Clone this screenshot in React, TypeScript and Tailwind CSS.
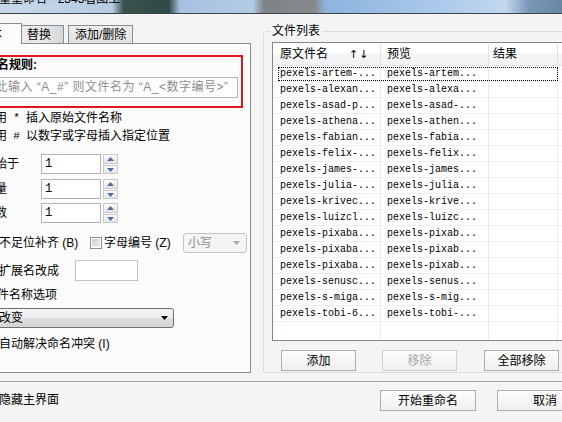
import React from "react";

const files: [string, string][] = [
  ["pexels-artem-...", "pexels-artem..."],
  ["pexels-alexan...", "pexels-alexa..."],
  ["pexels-asad-p...", "pexels-asad-..."],
  ["pexels-athena...", "pexels-athen..."],
  ["pexels-fabian...", "pexels-fabia..."],
  ["pexels-felix-...", "pexels-felix..."],
  ["pexels-james-...", "pexels-james..."],
  ["pexels-julia-...", "pexels-julia..."],
  ["pexels-krivec...", "pexels-krive..."],
  ["pexels-luizcl...", "pexels-luizc..."],
  ["pexels-pixaba...", "pexels-pixab..."],
  ["pexels-pixaba...", "pexels-pixab..."],
  ["pexels-pixaba...", "pexels-pixab..."],
  ["pexels-senusc...", "pexels-senus..."],
  ["pexels-s-miga...", "pexels-s-mig..."],
  ["pexels-tobi-6...", "pexels-tobi-..."],
];

function Tri({ up = false, color = "#000" }: { up?: boolean; color?: string }) {
  return (
    <svg width="7" height="4" viewBox="0 0 7 4">
      <path d={up ? "M0 4 L3.5 0 L7 4 Z" : "M0 0 L7 0 L3.5 4 Z"} fill={color} />
    </svg>
  );
}

function Check() {
  return (
    <span className="flex h-[12px] w-[12px] shrink-0 items-center justify-center border border-[#8f8f8f] bg-white">
      <span className="h-[8px] w-[8px] bg-[linear-gradient(135deg,#c9c9c9,#f3f3f3)]" />
    </span>
  );
}

function Spin({ label }: { label: string }) {
  return (
    <div className="flex h-[20px] items-center">
      <span className="w-[58px] leading-[16px]">{label}</span>
      <div className="h-[20px] w-[60px] border border-[#b4b4b4] bg-white pl-[3px] font-['Liberation_Mono',monospace] text-[12px] leading-[18px]">
        1
      </div>
      <div className="ml-[2px] flex h-[20px] w-[15px] flex-col gap-[1px]">
        <div className="flex h-[10px] items-center justify-center border border-[#c9c9c9] bg-[linear-gradient(#fbfbfb,#e4e4e4)]">
          <Tri up color="#4f6c9c" />
        </div>
        <div className="flex h-[9px] items-center justify-center border border-[#c9c9c9] bg-[linear-gradient(#fbfbfb,#e4e4e4)]">
          <Tri color="#4f6c9c" />
        </div>
      </div>
    </div>
  );
}

function Btn({ label, className, disabled = false }: { label: string; className: string; disabled?: boolean }) {
  return (
    <div
      className={`flex h-[21px] shrink-0 items-center justify-center border bg-[linear-gradient(#fbfbfb,#f0f0f0)] leading-[16px] ${
        disabled ? "border-[#d2d2d2] text-[#a6a6a6]" : "border-[#adadad] text-black"
      } ${className}`}
    >
      {label}
    </div>
  );
}

export default function App() {
  return (
    <div className="flex h-[422px] w-[562px] flex-col overflow-hidden bg-[#f4f4f4] font-['Liberation_Sans','Noto_Sans_CJK_SC',sans-serif] text-[12px] text-black">
      {/* title bar */}
      <div className="h-[14px] shrink-0 overflow-hidden border-b border-[#3b434b] bg-[linear-gradient(90deg,#c8d8e8_0%,#b6cce2_20%,#3a524c_22%,#2f4a45_30%,#a6c2e0_32%,#b2cbe4_45%,#7f8286_47%,#868a8e_56%,#8db4de_58%,#9dc0e6_70%,#b8d2ee_85%,#c2d8ee_90%,#7a98b8_94%,#6a86a4_100%)]">
        <div className="-ml-[13px] -mt-[8px] whitespace-nowrap text-[12px] leading-[14px]">批量重命名 - 2345看图王</div>
      </div>

      <div className="flex h-[367px] shrink-0">
        {/* left column */}
        <div className="-ml-[40px] w-[291px] shrink-0 pt-[9px]">
          <div className="flex h-[21px] items-end">
            <div className="relative z-10 flex h-[21px] w-[62px] items-center justify-end border border-b-0 border-[#898c95] bg-[#fbfbfb] pr-[19px] leading-[16px]">
              基本
            </div>
            <div className="flex h-[19px] w-[42px] items-center border border-l-0 border-[#898c95] bg-[linear-gradient(90deg,#ececec_0%,#e6e6e6_60%,#d6d6d6_100%)] pl-[5px] leading-[16px]">
              替换
            </div>
            <div className="ml-[4px] flex h-[19px] w-[65px] items-center border border-[#898c95] bg-[linear-gradient(#ededed,#e1e1e1)] pl-[6px] leading-[16px]">
              添加/删除
            </div>
          </div>
          <div className="-mt-[1px] flex h-[330px] flex-col border border-[#898c95] bg-[#fbfbfb] pl-[22px]">
            {/* rule box */}
            <div className="-ml-[13px] mt-[11px] flex h-[53px] w-[273px] flex-col border-2 border-[#e0161e]">
              <div className="ml-[13px] font-bold leading-[16px]">命名规则:</div>
              <div className="mt-[4px] h-[21px] w-[266px] border border-[#b4b4b4] bg-white pl-[10px] leading-[19px] tracking-[0.5px] whitespace-nowrap text-[#8c8c8c]">
                在此输入 “A_#” 则文件名为 “A_&lt;数字编号&gt;”
              </div>
            </div>
            <div className="mt-[2px] flex whitespace-nowrap leading-[16px]">
              使用<span className="w-[19px] text-center font-['Liberation_Mono',monospace] text-[11px]">*</span>插入原始文件名称
            </div>
            <div className="mt-[2px] flex whitespace-nowrap leading-[16px]">
              使用<span className="w-[19px] text-center font-['Liberation_Mono',monospace] text-[11px]">#</span>以数字或字母插入指定位置
            </div>
            <div className="mt-[10px]">
              <Spin label="开始于" />
            </div>
            <div className="mt-[5px]">
              <Spin label="增量" />
            </div>
            <div className="mt-[4px]">
              <Spin label="位数" />
            </div>
            <div className="mt-[10px] flex h-[20px] items-center">
              <Check />
              <span className="ml-[4px] w-[91px] whitespace-nowrap leading-[16px]">不足位补齐 (B)</span>
              <Check />
              <span className="ml-[2px] w-[79px] whitespace-nowrap leading-[16px]">字母编号 (Z)</span>
              <div className="flex h-[20px] w-[64px] items-center justify-between rounded-[3px] border border-[#c5c5c5] bg-[#f4f4f4] pl-[4px] pr-[6px] text-[#8d8d8d]">
                <span className="leading-[16px]">小写</span>
                <Tri color="#a9a9a9" />
              </div>
            </div>
            <div className="mt-[7px] flex h-[21px] items-center">
              <Check />
              <span className="ml-[4px] w-[76px] whitespace-nowrap leading-[16px]">扩展名改成</span>
              <div className="h-[21px] w-[63px] border border-[#c3c3c3] bg-white" />
            </div>
            <div className="ml-[2px] mt-[6px] leading-[16px]">文件名称选项</div>
            <div className="-ml-[13px] mt-[5px] flex h-[20px] w-[204px] items-center justify-between rounded-[3px] border border-[#707070] bg-[linear-gradient(#f4f4f4_0%,#ececec_50%,#dddddd_51%,#d6d6d6_100%)] pl-[16px] pr-[5px]">
              <span className="leading-[16px]">不改变</span>
              <Tri />
            </div>
            <div className="mt-[8px] flex h-[16px] items-center">
              <Check />
              <span className="ml-[4px] whitespace-nowrap leading-[16px]">自动解决命名冲突 (I)</span>
            </div>
          </div>
        </div>

        {/* right column */}
        <div className="flex-1">
          <fieldset className="ml-[12px] mt-[9px] h-[350px] w-[330px] rounded-[3px] border border-[#d5dfe5] pb-[1px] pl-[8px] pt-[3px]">
            <legend className="-ml-[2px] px-[2px] leading-[16px]">文件列表</legend>
            <div className="flex h-[299px] w-[310px] flex-col border border-[#828790] bg-white">
              <div className="flex h-[23px] shrink-0 border-b border-[#e5e5e5] bg-[linear-gradient(#ffffff_0%,#ffffff_45%,#f4f5f7_50%,#f1f2f4_100%)] pt-[1px] leading-[21px]">
                <div className="flex w-[108px] shrink-0 border-r border-[#dde2e8] pl-[7px]">
                  <span>原文件名</span>
                  <span className="ml-[21px] font-['DejaVu_Sans',sans-serif] text-[11px] tracking-[1px]">↑↓</span>
                </div>
                <div className="w-[108px] shrink-0 border-r border-[#dde2e8] pl-[6px]">预览</div>
                <div className="w-[69px] shrink-0 border-r border-[#dde2e8] pl-[4px]">结果</div>
                <div className="flex-1" />
              </div>
              {files.map(([a, b], i) => (
                <div
                  key={i}
                  className="relative flex h-[16px] shrink-0 border-b border-[#efefef] font-['Liberation_Mono',monospace] text-[10px] leading-[16px]"
                >
                  <div className="w-[108px] shrink-0 whitespace-nowrap border-r border-[#ececec] pl-[7px]">{a}</div>
                  <div className="w-[108px] shrink-0 whitespace-nowrap border-r border-[#ececec] pl-[6px]">{b}</div>
                  <div className="w-[69px] shrink-0 border-r border-[#ececec]" />
                  <div className="flex-1" />
                  {i === 0 && (
                    <span className="absolute bottom-0 left-[5px] right-[23px] top-[1px] border border-dotted border-black" />
                  )}
                </div>
              ))}
              <div className="flex flex-1">
                <div className="w-[108px] shrink-0 border-r border-[#ececec]" />
                <div className="w-[108px] shrink-0 border-r border-[#ececec]" />
                <div className="w-[69px] shrink-0 border-r border-[#ececec]" />
              </div>
            </div>
            <div className="mt-[9px] flex">
              <Btn label="添加" className="ml-[9px] w-[75px]" />
              <Btn label="移除" className="ml-[26px] w-[75px]" disabled />
              <Btn label="全部移除" className="ml-[27px] w-[75px]" />
            </div>
          </fieldset>
        </div>
      </div>

      <div className="h-[2px] shrink-0 border-t border-b border-t-[#a0a0a0] border-b-white" />

      <div className="flex pt-[7px]">
        <div className="-ml-[17px] flex w-[397px] shrink-0 items-center">
          <Check />
          <span className="ml-[4px] leading-[21px]">隐藏主界面</span>
        </div>
        <Btn label="开始重命名" className="w-[96px]" />
        <Btn label="取消" className="ml-[21px] w-[96px]" />
      </div>
    </div>
  );
}
